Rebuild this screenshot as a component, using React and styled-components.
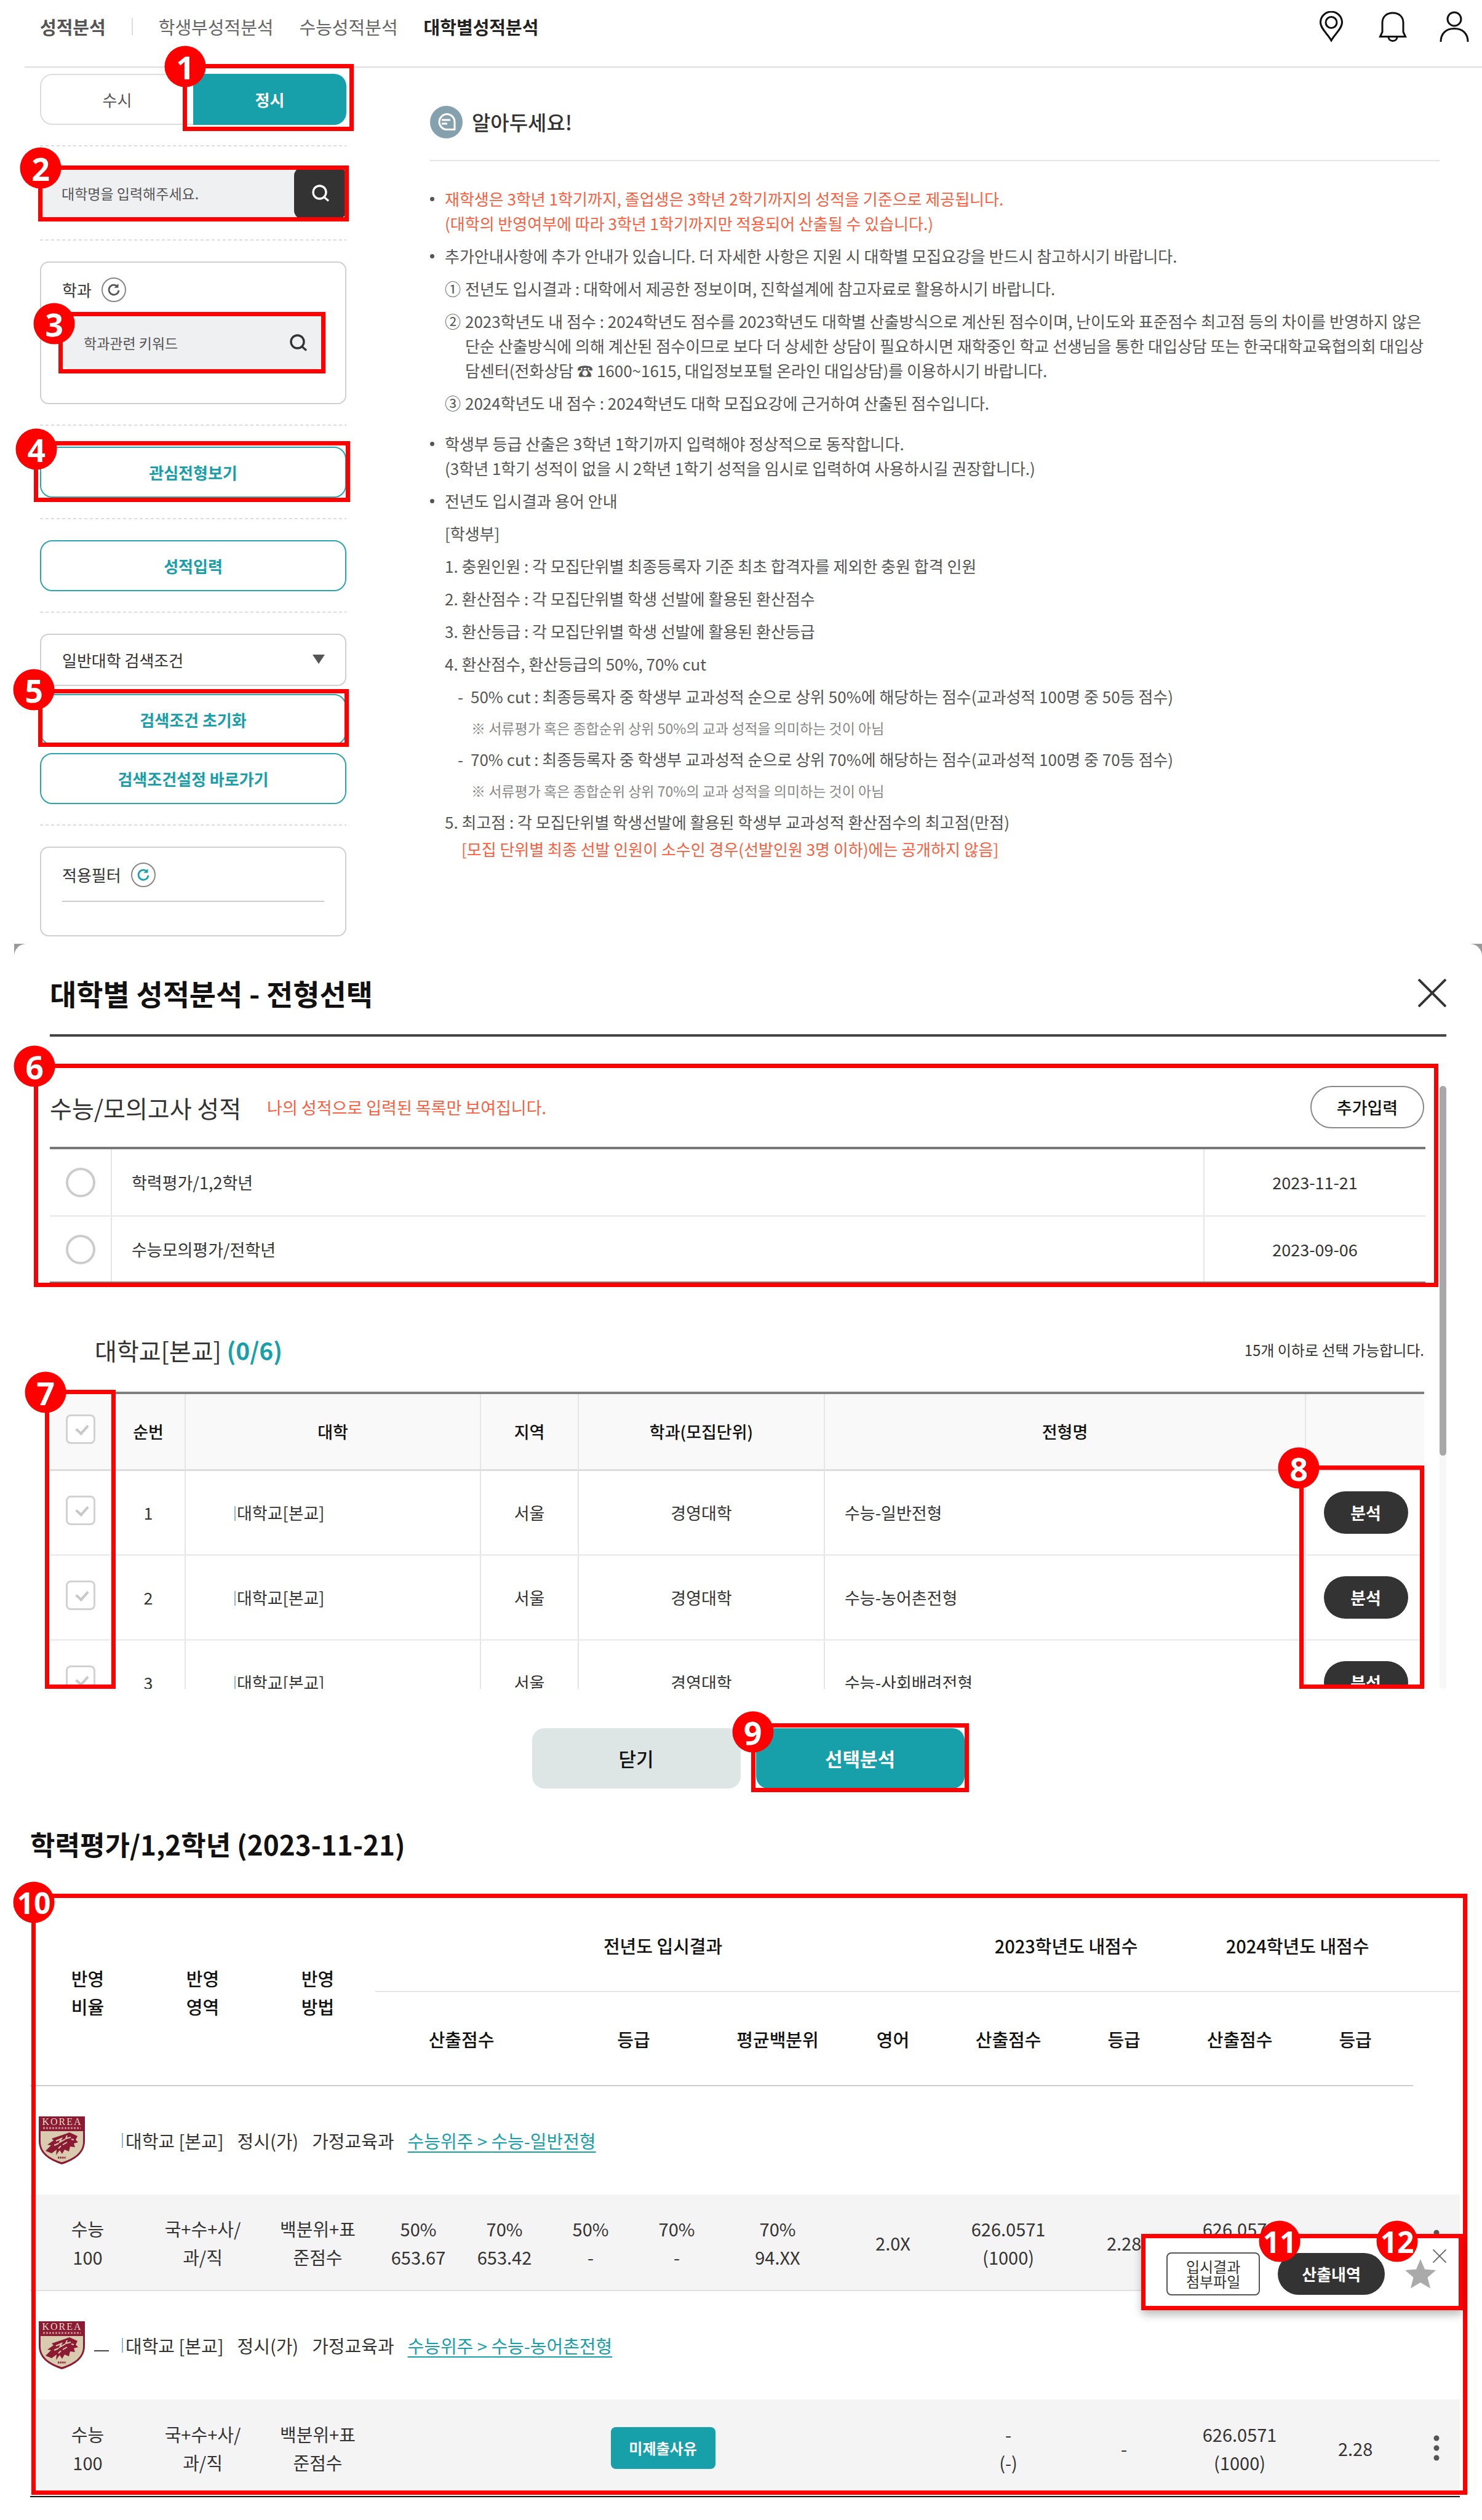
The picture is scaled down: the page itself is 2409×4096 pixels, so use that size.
import React from 'react';
import styled, { createGlobalStyle, css } from 'styled-components';

const GlobalStyle = createGlobalStyle`
  * {
    box-sizing: border-box;
  }

  body {
    margin: 0;
    background: #ffffff;
    color: #333333;
    font-family: 'Noto Sans CJK KR', 'Noto Sans', sans-serif;
    font-size: 26px;
    line-height: 40px;
    word-break: keep-all;
  }

  button, input, select {
    margin: 0;
    padding: 0;
    border: none;
    background: none;
    color: inherit;
    font: inherit;
  }

  button {
    cursor: pointer;
  }

  h1, h2, p, ul {
    margin: 0;
    padding: 0;
  }

  svg {
    display: block;
  }
`;

const teal = '#17a0a9';
const red = '#ff0000';

/* ---- guide marks ---- */

const Anchor = styled.div`
  position: relative;
`;

const Frame = styled.div`
  position: absolute;
  top: ${(props) => props.$top};
  right: ${(props) => props.$right};
  bottom: ${(props) => props.$bottom};
  left: ${(props) => props.$left};
  width: ${(props) => props.$width};
  border: 7px solid ${red};
  pointer-events: none;
  z-index: 1;
`;

const Badge = styled.span`
  position: absolute;
  top: ${(props) => props.$y || '-3px'};
  left: ${(props) => props.$x || '-3px'};
  display: flex;
  align-items: center;
  justify-content: center;
  width: 67px;
  height: 67px;
  border-radius: 50%;
  background: ${red};
  color: #ffffff;
  font-family: 'Open Sans', 'Noto Sans', sans-serif;
  font-size: ${(props) => (props.$small ? '48px' : '52px')};
  font-weight: 700;
  line-height: 67px;
  transform: translate(-50%, -50%);
`;

/* ---- top bar ---- */

const TopBar = styled.header`
  display: flex;
  justify-content: space-between;
  margin-left: 40px;
  padding: 18px 21px 40px 25px;
  border-bottom: 2px solid #dddddd;
`;

const Nav = styled.nav`
  display: flex;
  align-items: center;
  gap: 42px;
  font-size: 29px;
  line-height: 50px;
`;

const NavTitle = styled.strong`
  color: #555555;
  font-weight: 700;
`;

const NavBar = styled.span`
  width: 2px;
  height: 28px;
  background: #dddddd;
`;

const NavLink = styled.a`
  color: ${(props) => (props.$active ? '#222222' : '#666666')};
  font-weight: ${(props) => (props.$active ? 700 : 400)};
  text-decoration: none;
`;

const TopIcons = styled.div`
  display: flex;
  gap: 52px;
`;

const IconButton = styled.button`
  display: flex;
  align-items: center;
  justify-content: center;
`;

/* ---- side panel ---- */

const Columns = styled.div`
  display: flex;
  gap: 136px;
  padding: 0 69px 12px 65px;
`;

const Side = styled.aside`
  flex: none;
  width: 498px;
  padding-top: 10px;
`;

const Dashes = styled.div`
  height: 2px;
  margin: 33px 0 34px;
  background: repeating-linear-gradient(90deg, #dddddd 0 5px, transparent 5px 9px);
`;

const Tabs = styled.div`
  display: grid;
  grid-template-columns: 1fr 1fr;
  height: 83px;
`;

const Tab = styled.button`
  width: 100%;
  height: 83px;
  border: 2px solid #dddddd;
  border-right: none;
  border-radius: 20px 0 0 20px;
  color: #555555;

  ${(props) =>
    props.$active &&
    css`
      border: none;
      border-radius: 0 20px 20px 0;
      background: ${teal};
      color: #ffffff;
      font-weight: 700;
    `}
`;

const SearchBox = styled.form`
  display: flex;
  height: ${(props) => (props.$inner ? '87px' : '84px')};
  border-radius: 12px;
  background: #eff0f2;
`;

const SearchInput = styled.input`
  flex: 1;
  min-width: 0;
  padding-left: 35px;
  font-size: 23px;
  outline: none;

  &::placeholder {
    color: #555555;
    opacity: 1;
  }
`;

const SearchButton = styled.button`
  display: flex;
  align-items: center;
  justify-content: center;
  width: 85px;
  border-radius: 14px;
  color: ${(props) => (props.$dark ? '#ffffff' : '#333333')};
  background: ${(props) => (props.$dark ? '#333333' : 'transparent')};
`;

const Box = styled.section`
  min-height: ${(props) => props.$height};
  padding: 24px 34px;
  border: 2px solid #d0d0d0;
  border-radius: 14px;
`;

const BoxTitle = styled.div`
  display: flex;
  align-items: center;
  gap: 16px;
  height: 40px;
  margin-bottom: 22px;
`;

const ResetButton = styled.button`
  display: flex;
  align-items: center;
  justify-content: center;
  width: 40px;
  height: 40px;
  border: 2px solid #888888;
  border-radius: 50%;
  color: ${(props) => (props.$teal ? teal : '#555555')};
`;

const BoxLine = styled.div`
  height: 2px;
  background: #cccccc;
`;

const OutlineButton = styled.button`
  display: block;
  width: 100%;
  height: 83px;
  border: 2px solid #2ba5ad;
  border-radius: 20px;
  color: ${teal};
  font-weight: 700;
`;

const SelectWrap = styled.div`
  position: relative;
  margin-bottom: 13px;

  svg {
    position: absolute;
    top: 34px;
    right: 35px;
    pointer-events: none;
  }
`;

const Select = styled.select`
  display: block;
  width: 100%;
  height: 85px;
  padding-left: 34px;
  border: 2px solid #d0d0d0;
  border-radius: 14px;
  appearance: none;
`;

const ButtonStack = styled.div`
  display: grid;
  gap: 13px;
`;

/* ---- notice ---- */

const Notice = styled.main`
  flex: 1;
  min-width: 0;
  padding-top: 62px;
  color: #555555;
`;

const NoticeTitle = styled.h2`
  display: flex;
  align-items: center;
  gap: 15px;
  padding-bottom: 35px;
  border-bottom: 2px solid #e5e5e5;
  color: #333333;
  font-size: 33px;
  font-weight: 500;
  line-height: 53px;
`;

const NoticeList = styled.ul`
  display: flex;
  flex-direction: column;
  gap: 13px;
  padding-top: 41px;
  list-style: none;
`;

const NoticeItem = styled.li`
  display: flex;
  gap: 17px;
  margin-top: ${(props) => (props.$spaced ? '13px' : '0')};

  &::before {
    content: '';
    flex: none;
    width: 7px;
    height: 7px;
    margin-top: 17px;
    border-radius: 50%;
    background: #555555;
  }
`;

const SubItem = styled.li`
  display: flex;
  padding-left: ${(props) => (props.$dash ? '45px' : '24px')};
`;

const Lead = styled.span`
  flex: none;
  width: ${(props) => (props.$dash ? '21px' : '33px')};
`;

const SmallNote = styled.li`
  padding-left: 67px;
  color: #888888;
  font-size: 23px;
  line-height: 36px;
`;

const Warn = styled.span`
  color: #fa5f41;
`;

const WarnLine = styled.p`
  margin-top: 4px;
  padding-left: 27px;
  color: #fa5f41;
`;

/* ---- dialog ---- */

const Backdrop = styled.div`
  margin-left: 23px;
  background: #999999;
`;

const Dialog = styled.section`
  padding: 0 58px;
  border-radius: 20px 20px 0 0;
  background: #ffffff;
`;

const DialogHead = styled.div`
  display: flex;
  align-items: center;
  justify-content: space-between;
  padding: 45px 0 32px;
  border-bottom: 4px solid #444444;
`;

const DialogTitle = styled.h1`
  color: #111111;
  font-size: 47px;
  font-weight: 700;
  line-height: 70px;
`;

const DialogBody = styled.div`
  display: flex;
  gap: 25px;
  padding-top: 80px;
`;

const DialogContent = styled.div`
  flex: 1;
  min-width: 0;
  font-size: 27px;
`;

const ScrollTrack = styled.div`
  width: 11px;
  border-radius: 6px;
  background: #f7f7f7;
`;

const ScrollThumb = styled.div`
  height: 601px;
  border-radius: 6px;
  background: #a8a8a8;
`;

const PanelHead = styled.div`
  display: flex;
  align-items: center;
  margin-bottom: 30px;
`;

const PanelTitle = styled.h2`
  font-size: 39px;
  font-weight: 400;
  line-height: 60px;
`;

const PanelNote = styled.p`
  margin-left: 42px;
  color: #fa5f41;
`;

const AddButton = styled.button`
  width: 185px;
  height: 69px;
  margin-left: auto;
  border: 2px solid #888888;
  border-radius: 35px;
  color: #111111;
  font-weight: 500;
`;

const Table = styled.table`
  width: 100%;
  border-collapse: separate;
  border-spacing: 0;
  table-layout: fixed;
`;

const ScoreTable = styled(Table)`
  border-top: 4px solid #777777;
  border-bottom: 4px solid #777777;
`;

const ScoreCell = styled.td`
  height: 105px;
  padding: ${(props) => (props.$left ? '0 32px' : '0')};
  border-right: ${(props) => (props.$last ? 'none' : '2px solid #e5e5e5')};
  text-align: ${(props) => (props.$left ? 'left' : 'center')};

  tr:first-child & {
    height: 110px;
    border-bottom: 3px solid #eeeeee;
  }
`;

const Radio = styled.input`
  display: block;
  width: 48px;
  height: 48px;
  margin: 0 auto;
  border: 4px solid #cccccc;
  border-radius: 50%;
  appearance: none;
`;

const SchoolHead = styled.div`
  display: flex;
  align-items: center;
  justify-content: space-between;
  padding: 77px 0 38px 73px;
`;

const Count = styled.span`
  color: ${teal};
  font-weight: 700;
`;

const Limit = styled.p`
  font-size: 24px;
`;

const Clip = styled.div`
  max-height: 483px;
  overflow: hidden;
`;

const SchoolTable = styled(Table)`
  border-top: 4px solid #808080;
`;

const SchoolTh = styled.th`
  height: 125px;
  padding: 0;
  border-right: 2px solid #e5e5e5;
  border-bottom: 3px solid #dddddd;
  background: #f9f9f9;
  color: #111111;
  font-weight: 500;

  &:first-child {
    padding-bottom: 8px;
  }

  &:last-child {
    border-right: none;
  }
`;

const SchoolTd = styled.td`
  height: 138px;
  padding: 0 0 0 ${(props) => props.$indent || '0'};
  border-right: 2px solid #e5e5e5;
  border-bottom: 3px solid #eeeeee;
  text-align: ${(props) => (props.$indent ? 'left' : 'center')};

  &:first-child {
    padding-bottom: 8px;
  }

  &:last-child {
    border-right: none;
  }
`;

const Checkbox = styled.input`
  position: relative;
  display: block;
  width: 48px;
  height: 48px;
  margin: 0 auto;
  border: 3px solid #d2d2d2;
  border-radius: 8px;
  background: #ffffff;
  appearance: none;

  &::after {
    content: '';
    position: absolute;
    top: 10px;
    left: 17px;
    width: 9px;
    height: 15px;
    border: solid #c8c8c8;
    border-width: 0 4px 4px 0;
    transform: rotate(42deg);
  }
`;

const Stroke = styled.span`
  display: inline-block;
  width: 2px;
  height: 24px;
  margin-right: 2px;
  background: #8fb9dc;
  vertical-align: -2px;
`;

const PillButton = styled.button`
  width: ${(props) => props.$width};
  height: ${(props) => props.$height};
  border-radius: 35px;
  background: #333333;
  color: #ffffff;
  font-weight: 700;
`;

const DialogFoot = styled.div`
  display: flex;
  justify-content: center;
  gap: 25px;
  padding: 64px 0 58px;
`;

const FootButton = styled.button`
  display: block;
  width: 339px;
  height: 98px;
  border-radius: 20px;
  background: ${(props) => (props.$primary ? teal : '#dde6e5')};
  color: ${(props) => (props.$primary ? '#ffffff' : '#111111')};
  font-size: 31px;
  font-weight: ${(props) => (props.$primary ? 700 : 500)};
`;

/* ---- result ---- */

const Result = styled.section`
  padding: 0 36px 36px 49px;
  font-size: 29px;
  line-height: 46px;
`;

const ResultTitle = styled.h2`
  margin-bottom: 58px;
  color: #111111;
  font-size: 44px;
  font-weight: 700;
  line-height: 64px;
`;

const ResultTable = styled(Table)`
  border-bottom: 2px solid #111111;
`;

const ResultTh = styled.th`
  height: ${(props) => (props.$top ? '151px' : '153px')};
  padding: 0;
  border-bottom: 2px solid ${(props) => (props.$top ? '#e5e5e5' : '#cccccc')};
  color: #111111;
  font-weight: 500;
`;

const EmptyTh = styled.td`
  border-bottom: ${(props) => (props.$top ? '2px solid #e5e5e5' : 'none')};
`;

const SchoolCell = styled.td`
  height: 176px;
  padding: 0 0 0 14px;
`;

const SchoolLine = styled.div`
  display: flex;
  align-items: center;
  gap: 22px;
`;

const NameSlot = styled.span`
  display: flex;
  align-items: center;
  justify-content: space-between;
  width: 51px;
  margin: 0 -22px 0 -7px;
  padding-right: 2px;
`;

const NameDash = styled.span`
  width: 24px;
  height: 2px;
  margin-top: 18px;
  background: ${(props) => (props.$shown ? '#444444' : 'transparent')};
`;

const TypeLink = styled.a`
  color: ${teal};
  text-decoration: underline;
  text-decoration-thickness: 2px;
  text-underline-offset: 5px;
`;

const ResultTd = styled.td`
  position: relative;
  height: 157px;
  padding: 0;
  border-bottom: ${(props) => (props.$end ? 'none' : '2px solid #e2e2e2')};
  background: #f4f4f4;
  text-align: center;
  white-space: pre-line;
`;

const ReasonButton = styled.button`
  display: block;
  width: 170px;
  height: 68px;
  margin: 0 auto;
  border-radius: 8px;
  background: ${teal};
  color: #ffffff;
  font-size: 24px;
  font-weight: 700;
`;

const MoreButton = styled(IconButton)`
  width: 100%;
`;

const Popup = styled.div`
  position: absolute;
  top: 64px;
  right: -5px;
  display: flex;
  align-items: center;
  width: 523px;
  height: 124px;
  padding: 5px 0 0 41px;
  border-radius: 8px;
  background: #ffffff;
  box-shadow: 0 8px 14px rgba(0, 0, 0, 0.25);
  font-size: 26px;
  line-height: 24px;
  z-index: 2;
`;

const FileButton = styled.button`
  width: 152px;
  height: 70px;
  margin-right: 29px;
  border: 2px solid #555555;
  border-radius: 8px;
  font-size: 24px;
  line-height: 24px;
`;

const StarButton = styled(IconButton)`
  margin-left: 33px;
`;

const PopupClose = styled(IconButton)`
  position: absolute;
  top: 25px;
  right: 27px;
`;

/* ---- icons ---- */

const SearchIcon = () => (
  <svg width="30" height="30" viewBox="0 0 30 30" fill="none" stroke="currentColor" strokeWidth="3.4">
    <circle cx="13.5" cy="13.5" r="10.5" />
    <path d="M21 21.500l7 6" />
  </svg>
);

const ResetIcon = () => (
  <svg width="24" height="24" viewBox="0 0 24 24" fill="none" stroke="currentColor" strokeWidth="2.800">
    <path d="M17.500 6.200A8 8 0 1 0 20 13" />
    <path d="M19.500 2v6.800h-7z" fill="currentColor" stroke="none" />
  </svg>
);

const PinIcon = () => (
  <svg width="48" height="50" viewBox="-4 0 48 50" fill="none" stroke="#111" strokeWidth="3">
    <path d="M20 48C16 39 2.500 29 2.500 18.500a17.500 17.500 0 0 1 35 0C37.500 29 24 39 20 48z" />
    <circle cx="20" cy="18.500" r="9" />
  </svg>
);

const BellIcon = () => (
  <svg width="48" height="50" viewBox="-1 0 48 50" fill="none" stroke="#111" strokeWidth="3">
    <path d="M2.500 41.500L6 34V19C6 9 13 3 23 3s17 6 17 16v15l3.500 7.500z" />
    <path d="M16 42c0 4 3 6.500 7 6.500s7-2.500 7-6.500" />
  </svg>
);

const UserIcon = () => (
  <svg width="48" height="50" viewBox="1 0 48 50" fill="none" stroke="#111" strokeWidth="3">
    <circle cx="25" cy="13" r="11" />
    <path d="M3 50C3 37 11 28.500 25 28.500S47 37 47 50" />
  </svg>
);

const TalkIcon = () => (
  <svg width="53" height="53" viewBox="0 0 53 53" fill="none" stroke="#fff" strokeWidth="3">
    <circle cx="26.500" cy="26.500" r="26.500" fill="#86a1ae" stroke="none" />
    <path d="M40 38.500H26a12.500 12.500 0 1 1 14-12.500z" strokeLinejoin="round" />
    <path d="M19 23h14M19 29h9" />
  </svg>
);

const CloseIcon = ({ size, color, width }) => (
  <svg width={size} height={size} viewBox="0 0 46 46" stroke={color} strokeWidth={width}>
    <path d="M1 1l44 44M45 1L1 45" />
  </svg>
);

const StarIcon = () => (
  <svg width="50" height="50" viewBox="0 0 50 50" fill="#aaaaaa">
    <path d="M25 1l7 16.500 18 1.500-13.500 11.800L41 48.500 25 39 9 48.500l4.500-17.700L0 19l18-1.500z" />
  </svg>
);

const DotsIcon = () => (
  <svg width="10" height="42" viewBox="0 0 10 42" fill="#555555">
    <circle cx="5" cy="5" r="4.500" />
    <circle cx="5" cy="21" r="4.500" />
    <circle cx="5" cy="37" r="4.500" />
  </svg>
);

const SchoolLogo = () => (
  <svg width="75" height="78" viewBox="0 0 75 78">
    <path d="M0 0h75v40c0 20-16 31-37.500 38C16 71 0 60 0 40z" fill="#8b1a33" />
    <path d="M3 24h69v17c0 17-14 27-34.500 33.500C17 68 3 58 3 41z" fill="#d9cbb0" />
    <text x="38" y="14" fill="#ead9c8" fontFamily="Liberation Serif, serif" fontSize="16" letterSpacing="2" textAnchor="middle">
      KOREA
    </text>
    <path d="M7 19h61" stroke="#c98d92" strokeWidth="3" strokeDasharray="3 2" />
    <path
      d="M11 56l9-9-6-1 10-7-3-3 15-5 14-5 13 6-3 6 4 4-7 2 2 6-8-1-2 8-7-3-4 7-4-6-6 8 1-9-8 6z"
      fill="#8b1a33"
    />
    <path
      d="M28 40l9-4-3 6 9-5M46 31l-2 5 8-2M39 46l7-4M25 47l7-3M53 37l4 1M32 52l4-4"
      stroke="#d9cbb0"
      strokeWidth="2"
      fill="none"
    />
    <path d="M31 67h13" stroke="#8b1a33" strokeWidth="3" strokeDasharray="2 1" />
  </svg>
);

/* ---- data ---- */

const scores = [
  { id: 'mock12', name: '학력평가/1,2학년', date: '2023-11-21' },
  { id: 'mockAll', name: '수능모의평가/전학년', date: '2023-09-06' },
];

const schools = [
  { no: 1, type: '수능-일반전형' },
  { no: 2, type: '수능-농어촌전형' },
  { no: 3, type: '수능-사회배려전형' },
];

const terms = [
  ['1.', '충원인원 : 각 모집단위별 최종등록자 기준 최초 합격자를 제외한 충원 합격 인원'],
  ['2.', '환산점수 : 각 모집단위별 학생 선발에 활용된 환산점수'],
  ['3.', '환산등급 : 각 모집단위별 학생 선발에 활용된 환산등급'],
  ['4.', '환산점수, 환산등급의 50%, 70% cut'],
];

const scoreCols = [101, 1776, 359];
const schoolCols = [101, 120, 480, 159, 400, 782, 194];
const resultCols = [187, 187, 187, 140, 140, 140, 140, 188, 187, 188, 188, 188, 188, 76];

const Cols = ({ widths }) => (
  <colgroup>
    {widths.map((width, i) => (
      <col key={i} width={width} />
    ))}
  </colgroup>
);

const SidePanel = () => (
  <Side>
    <Tabs>
      <Tab type="button">수시</Tab>
      <Anchor>
        <Tab type="button" $active>
          정시
        </Tab>
        <Frame $top="-16px" $right="-12px" $bottom="-10px" $left="-17px">
          <Badge>1</Badge>
        </Frame>
      </Anchor>
    </Tabs>
    <Dashes />
    <Anchor>
      <SearchBox>
        <SearchInput type="text" aria-label="대학명" placeholder="대학명을 입력해주세요." />
        <SearchButton type="button" aria-label="대학 검색" $dark>
          <SearchIcon />
        </SearchButton>
      </SearchBox>
      <Frame $top="-3px" $right="-4px" $bottom="-4px" $left="-3px">
        <Badge>2</Badge>
      </Frame>
    </Anchor>
    <Dashes />
    <Box $height="232px">
      <BoxTitle>
        학과
        <ResetButton type="button" aria-label="학과 초기화">
          <ResetIcon />
        </ResetButton>
      </BoxTitle>
      <Anchor>
        <SearchBox $inner>
          <SearchInput type="text" aria-label="학과관련 키워드" placeholder="학과관련 키워드" />
          <SearchButton type="button" aria-label="학과 검색">
            <SearchIcon />
          </SearchButton>
        </SearchBox>
        <Frame $top="-6px" $right="-2px" $bottom="-7px" $left="-6px">
          <Badge $x="-14px" $y="12px">
            3
          </Badge>
        </Frame>
      </Anchor>
    </Box>
    <Dashes />
    <Anchor>
      <OutlineButton type="button">관심전형보기</OutlineButton>
      <Frame $top="-9px" $right="-6px" $bottom="-7px" $left="-10px">
        <Badge $y="6px">4</Badge>
      </Frame>
    </Anchor>
    <Dashes />
    <OutlineButton type="button">성적입력</OutlineButton>
    <Dashes />
    <SelectWrap>
      <Select aria-label="검색조건" defaultValue="univ">
        <option value="univ">일반대학 검색조건</option>
      </Select>
      <svg width="20" height="15" viewBox="0 0 20 15" fill="#555555">
        <path d="M0 0h20L10 15z" />
      </svg>
    </SelectWrap>
    <ButtonStack>
      <Anchor>
        <OutlineButton type="button">검색조건 초기화</OutlineButton>
        <Frame $top="-8px" $right="-4px" $bottom="-3px" $left="-3px">
          <Badge $x="-14px" $y="-6px">
            5
          </Badge>
        </Frame>
      </Anchor>
      <OutlineButton type="button">검색조건설정 바로가기</OutlineButton>
    </ButtonStack>
    <Dashes />
    <Box $height="146px">
      <BoxTitle>
        적용필터
        <ResetButton type="button" aria-label="필터 초기화" $teal>
          <ResetIcon />
        </ResetButton>
      </BoxTitle>
      <BoxLine />
    </Box>
  </Side>
);

const NoticePanel = () => (
  <Notice>
    <NoticeTitle>
      <TalkIcon />
      알아두세요!
    </NoticeTitle>
    <NoticeList>
      <NoticeItem>
        <Warn>
          재학생은 3학년 1학기까지, 졸업생은 3학년 2학기까지의 성적을 기준으로 제공됩니다.
          <br />
          (대학의 반영여부에 따라 3학년 1학기까지만 적용되어 산출될 수 있습니다.)
        </Warn>
      </NoticeItem>
      <NoticeItem>
        추가안내사항에 추가 안내가 있습니다. 더 자세한 사항은 지원 시 대학별 모집요강을 반드시 참고하시기 바랍니다.
      </NoticeItem>
      <SubItem>
        <Lead>①</Lead>
        전년도 입시결과 : 대학에서 제공한 정보이며, 진학설계에 참고자료로 활용하시기 바랍니다.
      </SubItem>
      <SubItem>
        <Lead>②</Lead>
        <span>
          2023학년도 내 점수 : 2024학년도 점수를 2023학년도 대학별 산출방식으로 계산된 점수이며, 난이도와 표준점수 최고점 등의 차이를 반영하지 않은
          <br />
          단순 산출방식에 의해 계산된 점수이므로 보다 더 상세한 상담이 필요하시면 재학중인 학교 선생님을 통한 대입상담 또는 한국대학교육협의회 대입상
          <br />
          담센터(전화상담 ☎ 1600~1615, 대입정보포털 온라인 대입상담)를 이용하시기 바랍니다.
        </span>
      </SubItem>
      <SubItem>
        <Lead>③</Lead>
        2024학년도 내 점수 : 2024학년도 대학 모집요강에 근거하여 산출된 점수입니다.
      </SubItem>
      <NoticeItem $spaced>
        <span>
          학생부 등급 산출은 3학년 1학기까지 입력해야 정상적으로 동작합니다.
          <br />
          (3학년 1학기 성적이 없을 시 2학년 1학기 성적을 임시로 입력하여 사용하시길 권장합니다.)
        </span>
      </NoticeItem>
      <NoticeItem>전년도 입시결과 용어 안내</NoticeItem>
      <SubItem>[학생부]</SubItem>
      {terms.map(([no, text]) => (
        <SubItem key={no}>
          {no} {text}
        </SubItem>
      ))}
      <SubItem $dash>
        <Lead $dash>-</Lead>
        50% cut : 최종등록자 중 학생부 교과성적 순으로 상위 50%에 해당하는 점수(교과성적 100명 중 50등 점수)
      </SubItem>
      <SmallNote>※ 서류평가 혹은 종합순위 상위 50%의 교과 성적을 의미하는 것이 아님</SmallNote>
      <SubItem $dash>
        <Lead $dash>-</Lead>
        70% cut : 최종등록자 중 학생부 교과성적 순으로 상위 70%에 해당하는 점수(교과성적 100명 중 70등 점수)
      </SubItem>
      <SmallNote>※ 서류평가 혹은 종합순위 상위 70%의 교과 성적을 의미하는 것이 아님</SmallNote>
      <SubItem>
        <div>
          5. 최고점 : 각 모집단위별 학생선발에 활용된 학생부 교과성적 환산점수의 최고점(만점)
          <WarnLine>[모집 단위별 최종 선발 인원이 소수인 경우(선발인원 3명 이하)에는 공개하지 않음]</WarnLine>
        </div>
      </SubItem>
    </NoticeList>
  </Notice>
);

const ScorePanel = () => (
  <Anchor>
    <PanelHead>
      <PanelTitle>수능/모의고사 성적</PanelTitle>
      <PanelNote>나의 성적으로 입력된 목록만 보여집니다.</PanelNote>
      <AddButton type="button">추가입력</AddButton>
    </PanelHead>
    <ScoreTable>
      <Cols widths={scoreCols} />
      <tbody>
        {scores.map((score) => (
          <tr key={score.id}>
            <ScoreCell>
              <Radio type="radio" name="score" id={score.id} />
            </ScoreCell>
            <ScoreCell $left>
              <label htmlFor={score.id}>{score.name}</label>
            </ScoreCell>
            <ScoreCell $last>{score.date}</ScoreCell>
          </tr>
        ))}
      </tbody>
    </ScoreTable>
    <Frame $top="-36px" $right="-23px" $bottom="-5px" $left="-26px">
      <Badge $x="-6px">6</Badge>
    </Frame>
  </Anchor>
);

const SchoolPanel = () => (
  <>
    <SchoolHead>
      <PanelTitle>
        대학교[본교] <Count>(0/6)</Count>
      </PanelTitle>
      <Limit>15개 이하로 선택 가능합니다.</Limit>
    </SchoolHead>
    <Anchor>
      <Clip>
        <SchoolTable>
          <Cols widths={schoolCols} />
          <thead>
            <tr>
              <SchoolTh>
                <Checkbox type="checkbox" aria-label="전체 선택" />
              </SchoolTh>
              <SchoolTh>순번</SchoolTh>
              <SchoolTh>대학</SchoolTh>
              <SchoolTh>지역</SchoolTh>
              <SchoolTh>학과(모집단위)</SchoolTh>
              <SchoolTh>전형명</SchoolTh>
              <SchoolTh />
            </tr>
          </thead>
          <tbody>
            {schools.map((school) => (
              <tr key={school.no}>
                <SchoolTd>
                  <Checkbox type="checkbox" aria-label={`${school.no}번 선택`} />
                </SchoolTd>
                <SchoolTd>{school.no}</SchoolTd>
                <SchoolTd $indent="79px">
                  <Stroke />
                  대학교[본교]
                </SchoolTd>
                <SchoolTd>서울</SchoolTd>
                <SchoolTd>경영대학</SchoolTd>
                <SchoolTd $indent="32px">{school.type}</SchoolTd>
                <SchoolTd>
                  <PillButton type="button" $width="137px" $height="69px">
                    분석
                  </PillButton>
                </SchoolTd>
              </tr>
            ))}
          </tbody>
        </SchoolTable>
      </Clip>
      <Frame $top="-3px" $bottom="0" $left="-8px" $width="115px">
        <Badge $x="-6px">7</Badge>
      </Frame>
      <Frame $top="120px" $right="0" $bottom="0" $width="203px">
        <Badge $x="-8px">8</Badge>
      </Frame>
    </Anchor>
  </>
);

const ResultInfo = ({ type, dash }) => (
  <tr>
    <SchoolCell colSpan={14}>
      <SchoolLine>
        <SchoolLogo />
        <NameSlot>
          <NameDash $shown={dash} />
          <Stroke />
        </NameSlot>
        <span>대학교 [본교]</span>
        <span>정시(가)</span>
        <span>가정교육과</span>
        <TypeLink href="#type">수능위주 &gt; {type}</TypeLink>
      </SchoolLine>
    </SchoolCell>
  </tr>
);

const ResultPanel = () => (
  <Result>
    <ResultTitle>학력평가/1,2학년 (2023-11-21)</ResultTitle>
    <Anchor>
      <ResultTable>
        <Cols widths={resultCols} />
        <thead>
          <tr>
            <ResultTh rowSpan={2}>
              반영
              <br />
              비율
            </ResultTh>
            <ResultTh rowSpan={2}>
              반영
              <br />
              영역
            </ResultTh>
            <ResultTh rowSpan={2}>
              반영
              <br />
              방법
            </ResultTh>
            <ResultTh colSpan={6} $top>
              전년도 입시결과
            </ResultTh>
            <ResultTh colSpan={2} $top>
              2023학년도 내점수
            </ResultTh>
            <ResultTh colSpan={2} $top>
              2024학년도 내점수
            </ResultTh>
            <EmptyTh $top />
          </tr>
          <tr>
            <ResultTh colSpan={2}>산출점수</ResultTh>
            <ResultTh colSpan={2}>등급</ResultTh>
            <ResultTh>평균백분위</ResultTh>
            <ResultTh>영어</ResultTh>
            <ResultTh>산출점수</ResultTh>
            <ResultTh>등급</ResultTh>
            <ResultTh>산출점수</ResultTh>
            <ResultTh>등급</ResultTh>
            <EmptyTh />
          </tr>
        </thead>
        <tbody>
          <ResultInfo type="수능-일반전형" />
          <tr>
            <ResultTd>{'수능\n100'}</ResultTd>
            <ResultTd>{'국+수+사/\n과/직'}</ResultTd>
            <ResultTd>{'백분위+표\n준점수'}</ResultTd>
            <ResultTd>{'50%\n653.67'}</ResultTd>
            <ResultTd>{'70%\n653.42'}</ResultTd>
            <ResultTd>{'50%\n-'}</ResultTd>
            <ResultTd>{'70%\n-'}</ResultTd>
            <ResultTd>{'70%\n94.XX'}</ResultTd>
            <ResultTd>2.0X</ResultTd>
            <ResultTd>{'626.0571\n(1000)'}</ResultTd>
            <ResultTd>2.28</ResultTd>
            <ResultTd>{'626.0571\n(1000)'}</ResultTd>
            <ResultTd>2.28</ResultTd>
            <ResultTd>
              <MoreButton type="button" aria-label="더보기">
                <DotsIcon />
              </MoreButton>
              <Popup>
                <FileButton type="button">
                  입시결과
                  <br />
                  첨부파일
                </FileButton>
                <PillButton type="button" $width="174px" $height="68px">
                  산출내역
                </PillButton>
                <StarButton type="button" aria-label="관심전형">
                  <StarIcon />
                </StarButton>
                <PopupClose type="button" aria-label="닫기">
                  <CloseIcon size={22} color="#666666" width={4} />
                </PopupClose>
                <Frame $top="0" $right="0" $bottom="0" $left="0">
                  <Badge $x="218px" $y="5px" $small>
                    11
                  </Badge>
                  <Badge $x="409px" $y="5px" $small>
                    12
                  </Badge>
                </Frame>
              </Popup>
            </ResultTd>
          </tr>
          <ResultInfo type="수능-농어촌전형" dash />
          <tr>
            <ResultTd $end>{'수능\n100'}</ResultTd>
            <ResultTd $end>{'국+수+사/\n과/직'}</ResultTd>
            <ResultTd $end>{'백분위+표\n준점수'}</ResultTd>
            <ResultTd colSpan={6} $end>
              <ReasonButton type="button">미제출사유</ReasonButton>
            </ResultTd>
            <ResultTd $end>{'-\n(-)'}</ResultTd>
            <ResultTd $end>-</ResultTd>
            <ResultTd $end>{'626.0571\n(1000)'}</ResultTd>
            <ResultTd $end>2.28</ResultTd>
            <ResultTd $end>
              <MoreButton type="button" aria-label="더보기">
                <DotsIcon />
              </MoreButton>
            </ResultTd>
          </tr>
        </tbody>
      </ResultTable>
      <Frame $top="-9px" $right="-12px" $bottom="4px" $left="2px">
        <Badge $y="7px" $small>
          10
        </Badge>
      </Frame>
    </Anchor>
  </Result>
);

const App = () => {
  return (
    <>
      <GlobalStyle />
      <TopBar>
        <Nav>
          <NavTitle>성적분석</NavTitle>
          <NavBar />
          <NavLink href="#record">학생부성적분석</NavLink>
          <NavLink href="#exam">수능성적분석</NavLink>
          <NavLink href="#univ" $active>
            대학별성적분석
          </NavLink>
        </Nav>
        <TopIcons>
          <IconButton type="button" aria-label="위치">
            <PinIcon />
          </IconButton>
          <IconButton type="button" aria-label="알림">
            <BellIcon />
          </IconButton>
          <IconButton type="button" aria-label="내 정보">
            <UserIcon />
          </IconButton>
        </TopIcons>
      </TopBar>
      <Columns>
        <SidePanel />
        <NoticePanel />
      </Columns>
      <Backdrop>
        <Dialog>
          <DialogHead>
            <DialogTitle>대학별 성적분석 - 전형선택</DialogTitle>
            <IconButton type="button" aria-label="닫기">
              <CloseIcon size={46} color="#333333" width={4} />
            </IconButton>
          </DialogHead>
          <DialogBody>
            <DialogContent>
              <ScorePanel />
              <SchoolPanel />
            </DialogContent>
            <ScrollTrack>
              <ScrollThumb />
            </ScrollTrack>
          </DialogBody>
          <DialogFoot>
            <FootButton type="button">닫기</FootButton>
            <Anchor>
              <FootButton type="button" $primary>
                선택분석
              </FootButton>
              <Frame $top="-8px" $right="-7px" $bottom="-6px" $left="-8px">
                <Badge $x="-4px" $y="7px">
                  9
                </Badge>
              </Frame>
            </Anchor>
          </DialogFoot>
        </Dialog>
      </Backdrop>
      <ResultPanel />
    </>
  );
};

export default App;
